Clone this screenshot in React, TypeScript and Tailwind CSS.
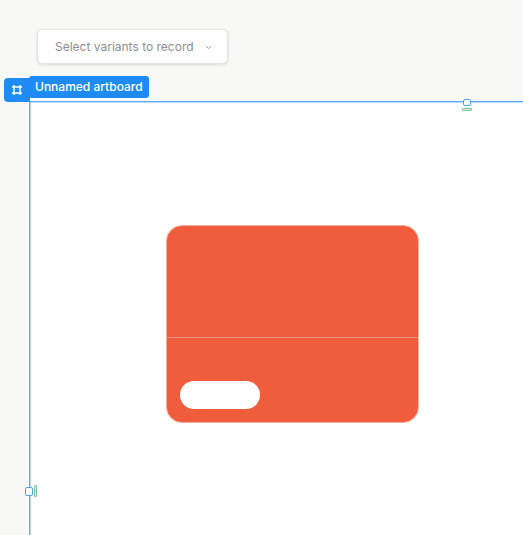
import React from "react";

export default function App() {
  return (
    <div
      className="relative w-[523px] h-[535px] overflow-hidden bg-[#f8f8f6]"
      style={{ fontFamily: "Inter, 'Noto Sans', sans-serif" }}
    >
      {/* Dropdown */}
      <div className="pt-[29px] pl-[37px]">
        <button className="flex h-[35px] w-[191px] items-center justify-between rounded-[5px] border border-[#e3e3e1] bg-white pl-[17px] pr-[15px] shadow-[0_1px_3px_rgba(0,0,0,0.12)]">
          <span className="text-[12px] text-[#8d8d8d]">Select variants to record</span>
          <svg width="7" height="5" viewBox="0 0 7 5" className="mt-[1px]">
            <path d="M1 1.2 L3.5 3.6 L6 1.2" fill="none" stroke="#9a9a9a" strokeWidth="1" />
          </svg>
        </button>
      </div>

      {/* Artboard (free canvas) */}
      <div className="absolute left-[29px] top-[101px] h-[460px] w-[540px] bg-white shadow-[inset_1.5px_1.5px_0_0_#62aef6]">
        <div className="absolute left-[137px] top-[124px] flex h-[198px] w-[253px] flex-col overflow-hidden rounded-[16px] border border-[#ecb0a2] bg-[#f05d3d]">
          <div className="h-[112px] border-b border-[#e8907e]" />
          <div className="flex flex-1 items-end pb-[13px] pl-[13px]">
            <div className="h-[28px] w-[80px] rounded-full bg-white" />
          </div>
        </div>
      </div>

      {/* Artboard tag */}
      <div className="absolute left-[4px] top-[78px] flex h-[24px] w-[26px] items-center justify-center rounded-l-[4px] bg-[#1f8cf5]">
        <svg width="12" height="12" viewBox="0 0 12 12">
          <path
            d="M3 1 V11 M9 1 V11 M1 3 H11 M1 9 H11"
            fill="none"
            stroke="white"
            strokeWidth="1.4"
          />
        </svg>
      </div>
      <div className="absolute left-[29px] top-[76px] flex h-[22px] w-[120px] items-center rounded-[3px] bg-[#1f8cf5] pl-[6px]">
        <span className="text-[12px] font-medium text-white">Unnamed artboard</span>
      </div>

      {/* Handles */}
      <div className="absolute left-[463px] top-[99px] h-[7px] w-[8px] rounded-[2px] border border-[#4a9ff0] bg-white" />
      <div className="absolute left-[462px] top-[108px] h-[3px] w-[10px] rounded-[1px] border border-[#7cc79a] bg-[#d6efdf]" />
      <div className="absolute left-[25px] top-[487px] h-[9px] w-[8px] rounded-[2px] border border-[#4a9ff0] bg-white" />
      <div className="absolute left-[34px] top-[485px] h-[12px] w-[3px] rounded-[1px] border border-[#7cc79a] bg-[#d6efdf]" />
    </div>
  );
}
